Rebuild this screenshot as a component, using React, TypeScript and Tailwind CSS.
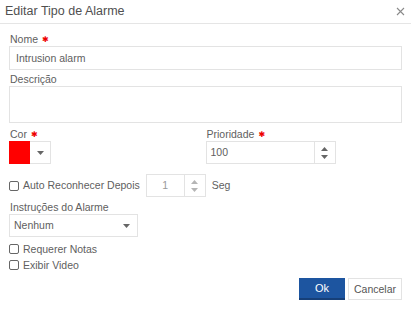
import * as React from "react";

function Req() {
  return (
    <span className="ml-[4px] inline-block h-[13px] align-top text-[8px] leading-[13px] text-[#ee0000]" style={{ fontFamily: '"DejaVu Sans", sans-serif' }}>
      ✱
    </span>
  );
}

function Arrow({ up = false, light = false }: { up?: boolean; light?: boolean }) {
  return (
    <svg width="7" height="4" viewBox="0 0 7 4" className="block">
      <path d={up ? "M0 4 L3.5 0 L7 4 Z" : "M0 0 L7 0 L3.5 4 Z"} fill={light ? "#b5b5b5" : "#666"} />
    </svg>
  );
}

function Spinner({ light = false }: { light?: boolean }) {
  return (
    <div className="flex w-[21px] flex-col items-center justify-center gap-[4px] border-l border-[#e3e3e3]">
      <Arrow up light={light} />
      <Arrow light={light} />
    </div>
  );
}

function Check({ label }: { label: string }) {
  return (
    <label className="flex h-[16px] items-center gap-[4px]">
      <span className="h-[10px] w-[10px] rounded-[2px] border border-[#666] bg-white" />
      <span>{label}</span>
    </label>
  );
}

export default function App() {
  return (
    <div className="h-[314px] w-[411px] bg-white text-[10.5px] leading-[13px] text-[#606060]" style={{ fontFamily: '"Liberation Sans", Arial, sans-serif' }}>
      <div className="flex h-[24px] items-center justify-between border-b border-[#e5e5e5] pl-[5px] pr-[6px]">
        <span className="text-[12.5px] text-[#505050]">Editar Tipo de Alarme</span>
        <svg width="9" height="9" viewBox="0 0 9 9">
          <path d="M1 1 L8 8 M8 1 L1 8" stroke="#8a8a8a" strokeWidth="1.1" />
        </svg>
      </div>

      <div className="px-[9px] pt-[9px]">
        <div className="h-[13px] pl-[1px]">
          Nome<Req />
        </div>
        <div className="flex h-[24px] items-center border border-[#e3e3e3] px-[6px]">Intrusion alarm</div>

        <div className="mt-[3px] h-[13px] pl-[1px]">Descrição</div>
        <div className="h-[37px] border border-[#e3e3e3]" />

        <div className="mt-[5px] grid grid-cols-2">
          <div>
            <div className="h-[13px] pl-[1px]">
              Cor<Req />
            </div>
            <div className="flex h-[23px] w-[42px] border border-[#e3e3e3]">
              <div className="-my-px -ml-px w-[21px] bg-[#ff0000]" />
              <div className="flex flex-1 items-center justify-center">
                <Arrow />
              </div>
            </div>
          </div>
          <div>
            <div className="h-[13px] pl-[1px]">
              Prioridade<Req />
            </div>
            <div className="flex h-[23px] w-[130px] border border-[#e3e3e3]">
              <div className="flex flex-1 items-center px-[4px]">100</div>
              <Spinner />
            </div>
          </div>
        </div>

        <div className="mt-[10px] flex items-center">
          <Check label="Auto Reconhecer Depois" />
          <div className="ml-[6px] flex h-[23px] w-[60px] border border-[#e3e3e3]">
            <div className="flex flex-1 items-center justify-center text-[#999]">1</div>
            <Spinner light />
          </div>
          <span className="ml-[6px]">Seg</span>
        </div>

        <div className="mt-[4px] h-[13px] pl-[1px]">Instruções do Alarme</div>
        <div className="flex h-[23px] w-[129px] items-center justify-between border border-[#e3e3e3] pl-[4px] pr-[7px]">
          <span>Nenhum</span>
          <Arrow />
        </div>

        <div className="mt-[4px] flex flex-col">
          <Check label="Requerer Notas" />
          <Check label="Exibir Video" />
        </div>

        <div className="mt-[5px] flex justify-end gap-[3px]">
          <button className="h-[22px] w-[46px] border-b-2 border-[#163f78] bg-[#1d55a0] text-[11px] text-white">Ok</button>
          <button className="h-[22px] w-[54px] border border-[#e3e3e3] bg-white text-[10.5px] text-[#555]">Cancelar</button>
        </div>
      </div>
    </div>
  );
}
